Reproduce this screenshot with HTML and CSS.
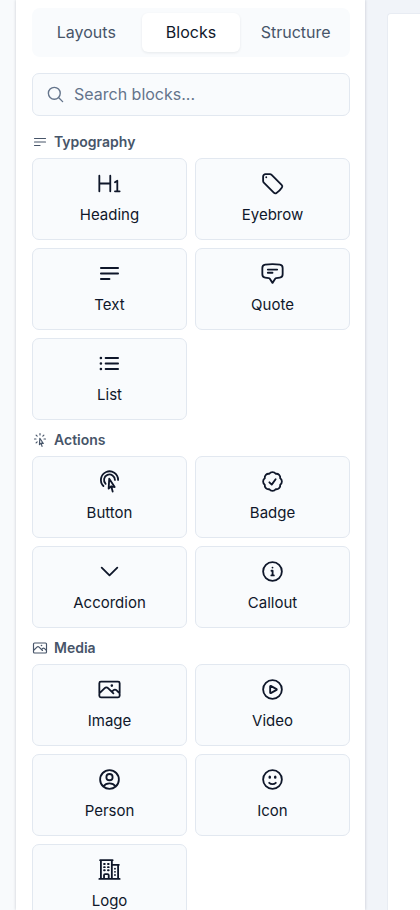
FILE: index.html
```html
<!DOCTYPE html>
<html lang="en">
<head>
<meta charset="utf-8">
<meta name="viewport" content="width=device-width, initial-scale=1">
<title>Blocks</title>
<link rel="stylesheet" href="styles.css">
</head>
<body>
<div class="editor">
  <aside class="panel">
    <nav class="tabs">
      <button type="button" class="tab">Layouts</button>
      <button type="button" class="tab tab-active">Blocks</button>
      <button type="button" class="tab">Structure</button>
    </nav>
    <label class="search">
      <svg class="icon icon-search" viewBox="0 0 24 24"><path d="m21 21-5.197-5.197m0 0A7.5 7.5 0 1 0 5.196 5.196a7.5 7.5 0 0 0 10.607 10.607Z"/></svg>
      <input class="search-input" type="search" placeholder="Search blocks..." aria-label="Search blocks">
    </label>

    <section class="group">
      <h2 class="group-title"><svg class="icon icon-small" viewBox="0 0 24 24"><path d="M3.75 6.75h16.5M3.75 12h16.5m-16.5 5.25H12"/></svg>Typography</h2>
      <div class="grid">
        <button type="button" class="card"><svg class="icon" viewBox="0 0 24 24"><path d="M2.243 4.493v7.5m0 0v7.502m0-7.501h10.5m0-7.5v7.5m0 0v7.501m4.501-8.627 2.25-1.5v10.126m0 0h-2.25m2.25 0h2.25"/></svg>Heading</button>
        <button type="button" class="card"><svg class="icon" viewBox="0 0 24 24"><path d="M9.568 3H5.25A2.25 2.25 0 0 0 3 5.25v4.318c0 .597.237 1.17.659 1.591l9.581 9.581c.699.699 1.78.872 2.607.33a18.095 18.095 0 0 0 5.223-5.223c.542-.827.369-1.908-.33-2.607L11.16 3.66A2.25 2.25 0 0 0 9.568 3Z"/><path d="M6 6h.008v.008H6V6Z"/></svg>Eyebrow</button>
        <button type="button" class="card"><svg class="icon" viewBox="0 0 24 24"><path d="M3.75 6.75h16.5M3.75 12h16.5m-16.5 5.25H12"/></svg>Text</button>
        <button type="button" class="card"><svg class="icon" viewBox="0 0 24 24"><path d="M7.5 8.25h9m-9 3H12m-9.75 1.51c0 1.6 1.123 2.994 2.707 3.227 1.129.166 2.27.293 3.423.379.35.026.67.21.865.501L12 21l2.755-4.133a1.14 1.14 0 0 1 .865-.501 48.172 48.172 0 0 0 3.423-.379c1.584-.233 2.707-1.626 2.707-3.228V6.741c0-1.602-1.123-2.995-2.707-3.228A48.394 48.394 0 0 0 12 3c-2.392 0-4.744.175-7.043.513C3.373 3.746 2.25 5.14 2.25 6.741v6.018Z"/></svg>Quote</button>
        <button type="button" class="card"><svg class="icon" viewBox="0 0 24 24"><path d="M8.25 6.75h12M8.25 12h12m-12 5.25h12M3.75 6.75h.007v.008H3.75V6.75Zm.375 0a.375.375 0 1 1-.75 0 .375.375 0 0 1 .75 0ZM3.75 12h.007v.008H3.75V12Zm.375 0a.375.375 0 1 1-.75 0 .375.375 0 0 1 .75 0Zm-.375 5.25h.007v.008H3.75v-.008Zm.375 0a.375.375 0 1 1-.75 0 .375.375 0 0 1 .75 0Z"/></svg>List</button>
      </div>
    </section>

    <section class="group">
      <h2 class="group-title"><svg class="icon icon-small" viewBox="0 0 24 24"><path d="M15.042 21.672 13.684 16.6m0 0-2.51 2.225.569-9.47 5.227 7.917-3.286-.672ZM12 2.25V4.5m5.834.166-1.591 1.591M20.25 10.5H18M7.757 14.743l-1.59 1.59M6 10.5H3.75m4.007-4.243-1.59-1.59"/></svg>Actions</h2>
      <div class="grid">
        <button type="button" class="card"><svg class="icon" viewBox="0 0 24 24"><path d="M15.042 21.672 13.684 16.6m0 0-2.51 2.225.569-9.47 5.227 7.917-3.286-.672Zm-7.518-.267A8.25 8.25 0 1 1 20.25 10.5M8.288 14.212A5.25 5.25 0 1 1 17.25 10.5"/></svg>Button</button>
        <button type="button" class="card"><svg class="icon" viewBox="0 0 24 24"><path d="M9 12.75 11.25 15 15 9.75M21 12c0 1.268-.63 2.39-1.593 3.068a3.745 3.745 0 0 1-1.043 3.296 3.745 3.745 0 0 1-3.296 1.043A3.745 3.745 0 0 1 12 21c-1.268 0-2.39-.63-3.068-1.593a3.746 3.746 0 0 1-3.296-1.043 3.745 3.745 0 0 1-1.043-3.296A3.745 3.745 0 0 1 3 12c0-1.268.63-2.39 1.593-3.068a3.745 3.745 0 0 1 1.043-3.296 3.746 3.746 0 0 1 3.296-1.043A3.746 3.746 0 0 1 12 3c1.268 0 2.39.63 3.068 1.593a3.746 3.746 0 0 1 3.296 1.043 3.746 3.746 0 0 1 1.043 3.296A3.745 3.745 0 0 1 21 12Z"/></svg>Badge</button>
        <button type="button" class="card"><svg class="icon" viewBox="0 0 24 24"><path d="m19.5 8.25-7.5 7.5-7.5-7.5"/></svg>Accordion</button>
        <button type="button" class="card"><svg class="icon" viewBox="0 0 24 24"><path d="M21 12a9 9 0 1 1-18 0 9 9 0 0 1 18 0Z"/><path d="M11 11.25h1.1v4.5M10.9 15.75h2.4M12 8.25h.008v.008H12V8.25Z"/></svg>Callout</button>
      </div>
    </section>

    <section class="group">
      <h2 class="group-title"><svg class="icon icon-small" viewBox="0 0 24 24"><path d="m2.25 15.75 5.159-5.159a2.25 2.25 0 0 1 3.182 0l5.159 5.159m-1.5-1.5 1.409-1.409a2.25 2.25 0 0 1 3.182 0l2.909 2.909m-18 3.75h16.5a1.5 1.5 0 0 0 1.5-1.5V6a1.5 1.5 0 0 0-1.5-1.5H3.75A1.5 1.5 0 0 0 2.25 6v12a1.5 1.5 0 0 0 1.5 1.5Zm10.5-11.25h.008v.008h-.008V8.25Zm.375 0a.375.375 0 1 1-.75 0 .375.375 0 0 1 .75 0Z"/></svg>Media</h2>
      <div class="grid">
        <button type="button" class="card"><svg class="icon" viewBox="0 0 24 24"><path d="m2.25 15.75 5.159-5.159a2.25 2.25 0 0 1 3.182 0l5.159 5.159m-1.5-1.5 1.409-1.409a2.25 2.25 0 0 1 3.182 0l2.909 2.909m-18 3.75h16.5a1.5 1.5 0 0 0 1.5-1.5V6a1.5 1.5 0 0 0-1.5-1.5H3.75A1.5 1.5 0 0 0 2.25 6v12a1.5 1.5 0 0 0 1.5 1.5Zm10.5-11.25h.008v.008h-.008V8.25Zm.375 0a.375.375 0 1 1-.75 0 .375.375 0 0 1 .75 0Z"/></svg>Image</button>
        <button type="button" class="card"><svg class="icon" viewBox="0 0 24 24"><path d="M21 12a9 9 0 1 1-18 0 9 9 0 0 1 18 0Z"/><path d="M15.91 11.672a.375.375 0 0 1 0 .656l-5.603 3.113a.375.375 0 0 1-.557-.328V8.887c0-.286.307-.466.557-.327l5.603 3.112Z"/></svg>Video</button>
        <button type="button" class="card"><svg class="icon" viewBox="0 0 24 24"><path d="M17.982 18.725A7.488 7.488 0 0 0 12 15.75a7.488 7.488 0 0 0-5.982 2.975m11.963 0a9 9 0 1 0-11.963 0m11.963 0A8.966 8.966 0 0 1 12 21a8.966 8.966 0 0 1-5.982-2.275M15 9.75a3 3 0 1 1-6 0 3 3 0 0 1 6 0Z"/></svg>Person</button>
        <button type="button" class="card"><svg class="icon" viewBox="0 0 24 24"><path d="M15.182 15.182a4.5 4.5 0 0 1-6.364 0M21 12a9 9 0 1 1-18 0 9 9 0 0 1 18 0ZM9.75 9.75c0 .414-.168.75-.375.75S9 10.164 9 9.75 9.168 9 9.375 9s.375.336.375.75Zm-.375 0h.008v.015h-.008V9.75Zm5.625 0c0 .414-.168.75-.375.75s-.375-.336-.375-.75.168-.75.375-.75.375.336.375.75Zm-.375 0h.008v.015h-.008V9.75Z"/></svg>Icon</button>
        <button type="button" class="card"><svg class="icon" viewBox="0 0 24 24"><path d="M2.25 21h19.5m-18-18v18m10.5-18v18m6-13.5V21M6.75 6.75h.75m-.75 3h.75m-.75 3h.75m3-6h.75m-.75 3h.75m-.75 3h.75M6.75 21v-3.375c0-.621.504-1.125 1.125-1.125h2.25c.621 0 1.125.504 1.125 1.125V21M3 3h12m-.75 4.5H21m-3.75 3.75h.008v.008h-.008v-.008Zm0 3h.008v.008h-.008v-.008Zm0 3h.008v.008h-.008v-.008Z"/></svg>Logo</button>
      </div>
    </section>
  </aside>
  <main class="canvas"></main>
</div>
</body>
</html>
```
FILE: styles.css
```css
* {
  box-sizing: border-box;
}

body {
  margin: 0;
  font-family: Inter, "Liberation Sans", sans-serif;
  color: #0f172a;
  background: #f1f4f9;
}

button,
input {
  font: inherit;
  color: inherit;
}

.editor {
  display: grid;
  grid-template-columns: minmax(0, 1fr) 33px;
  column-gap: 22px;
  height: 100vh;
  padding-left: 16px;
  overflow: hidden;
  background: linear-gradient(to right, #f8fafc 16px, #f1f4f9 16px);
}

.panel {
  min-height: 0;
  padding: 8px 15px 16px 16px;
  overflow: hidden;
  background: #fff;
  box-shadow: 0 0 3px rgba(15, 23, 42, 0.2);
}

.canvas {
  margin-top: 13px;
  border: 1px solid #e8ecf3;
  border-width: 1px 0 0 1px;
  border-top-left-radius: 4px;
  background: #fff;
}

.tabs {
  display: grid;
  grid-template-columns: repeat(3, 1fr);
  gap: 6px;
  padding: 5px;
  border-radius: 8px;
  background: #f9fbfd;
}

.tab {
  height: 39px;
  padding: 0 0 2px;
  border: 0;
  border-radius: 6px;
  background: transparent;
  font-size: 16px;
  color: #475569;
}

.tab-active {
  background: #fff;
  color: #0f172a;
  box-shadow: 0 1px 3px rgba(15, 23, 42, 0.08);
}

.search {
  display: flex;
  align-items: center;
  gap: 9px;
  height: 43px;
  margin-top: 16px;
  padding: 0 13px;
  border: 1px solid #e2e8f0;
  border-radius: 7px;
  background: #f9fbfd;
  color: #64748b;
}

.search-input {
  flex: 1;
  min-width: 0;
  padding: 0 0 2px;
  border: 0;
  outline: 0;
  background: transparent;
  font-size: 16px;
}

.search-input::placeholder {
  color: #64748b;
  opacity: 1;
}

.icon {
  flex: none;
  width: 25px;
  height: 25px;
  fill: none;
  stroke: currentColor;
  stroke-width: 1.75;
  stroke-linecap: round;
  stroke-linejoin: round;
}

.icon-search {
  width: 19px;
  height: 19px;
}

.icon-small {
  width: 16px;
  height: 16px;
}

.group-title {
  display: flex;
  align-items: center;
  gap: 6px;
  margin: 0;
  padding: 10px 0 6px;
  font-size: 14px;
  line-height: 20px;
  font-weight: 600;
  color: #475569;
}

.search + .group {
  margin-top: 6px;
}

.grid {
  display: grid;
  grid-template-columns: 1fr 1fr;
  gap: 8px;
}

.card {
  display: flex;
  flex-direction: column;
  align-items: center;
  gap: 9px;
  height: 82px;
  padding: 12px 8px;
  border: 1px solid #e2e8f0;
  border-radius: 7px;
  background: #f9fbfd;
  font-size: 15px;
  line-height: 20px;
}
```
